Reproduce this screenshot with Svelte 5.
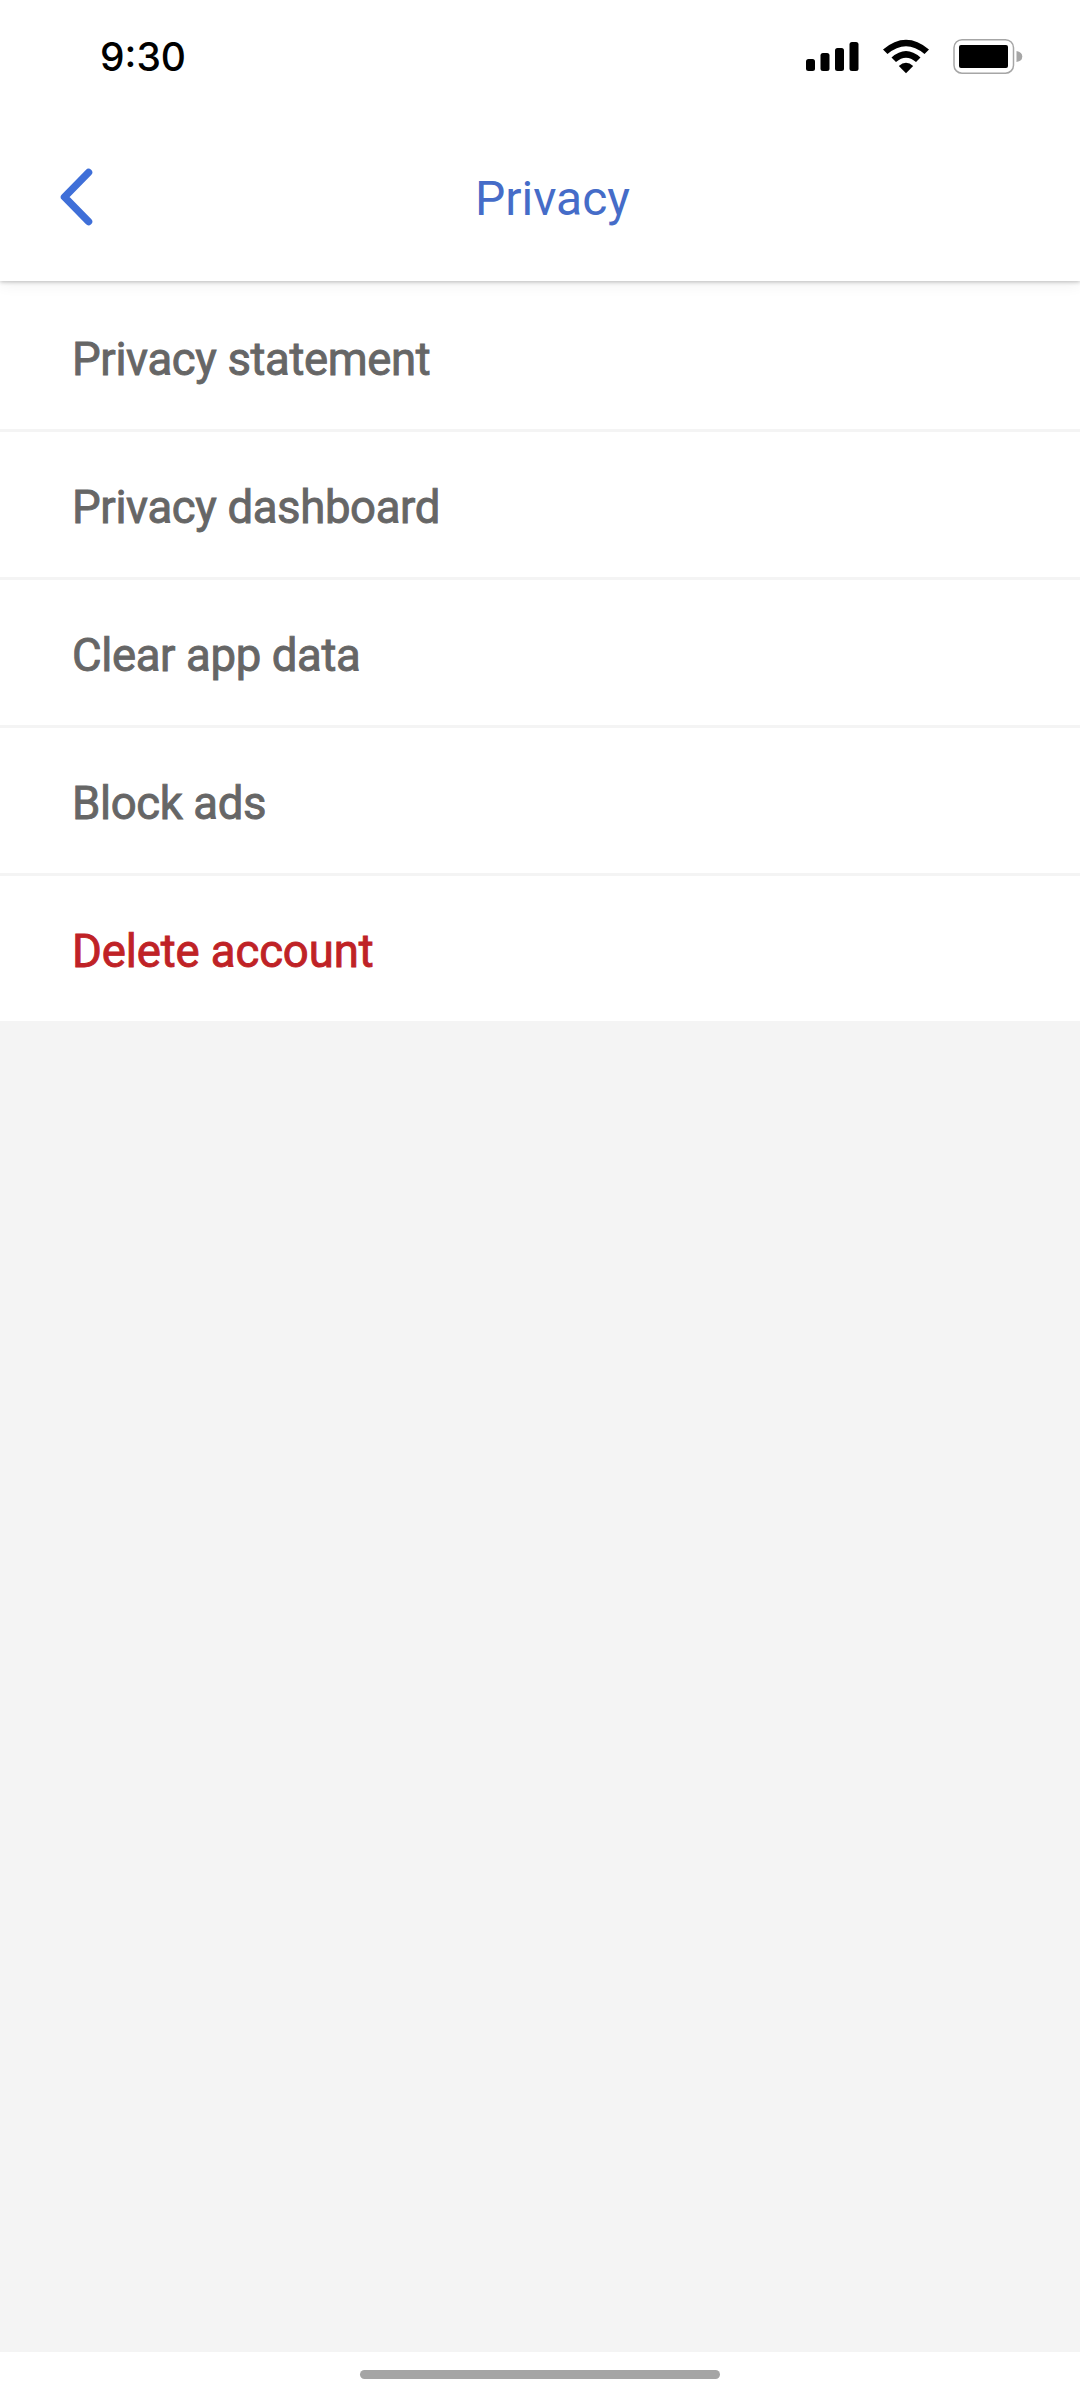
<script lang="ts">
	export let time = '9:30';
	export let title = 'Privacy';

	const items = [
		{ label: 'Privacy statement' },
		{ label: 'Privacy dashboard' },
		{ label: 'Clear app data' },
		{ label: 'Block ads' },
		{ label: 'Delete account', danger: true }
	];
</script>

<div class="screen">
	<div class="status-bar">
		<span class="time">{time}</span>
		<svg class="status-icons" width="220" height="40" viewBox="804 36 220 40">
			<!-- signal -->
			<rect x="806" y="59" width="9" height="12" rx="2.5" />
			<rect x="820.5" y="53" width="9" height="18" rx="2.5" />
			<rect x="835" y="48" width="9" height="23" rx="2.5" />
			<rect x="849.5" y="42" width="9" height="29" rx="2.5" />
			<!-- wifi -->
			<path d="M883 49.500 Q906 30 929 49.500 L924.500 54 Q906 38.500 887.500 54 Z" />
			<path d="M891.500 57.500 Q906 44.500 920.500 57.500 L916 62 Q906 53.500 896 62 Z" />
			<path d="M898.800 66 Q906 59.500 913.200 66 L906 73.200 Z" />
			<!-- battery -->
			<rect class="battery-case" x="954" y="39.700" width="59.500" height="33.500" rx="8" />
			<rect x="959" y="45" width="49" height="23" rx="2" />
			<path class="battery-tip" d="M1016.500 51 Q1022.300 52 1022.300 56.500 Q1022.300 61 1016.500 62 Z" />
		</svg>
	</div>

	<header class="header">
		<button class="back" aria-label="Back">
			<svg width="36" height="60" viewBox="0 0 36 60">
				<path d="M30.500 5.500 L6.500 30 L30.500 54.500" />
			</svg>
		</button>
		<h1>{title}</h1>
	</header>

	<ul class="menu">
		{#each items as item}
			<li class="row" class:danger={item.danger}>{item.label}</li>
		{/each}
	</ul>

	<div class="home-area">
		<div class="home-indicator"></div>
	</div>
</div>

<style>
	:global(body) {
		margin: 0;
	}
	.screen {
		display: flex;
		flex-direction: column;
		width: 1080px;
		height: 2400px;
		background-color: #f4f4f4;
		font-family: Roboto, sans-serif;
	}
	.status-bar {
		display: flex;
		align-items: center;
		justify-content: space-between;
		height: 112px;
		padding: 0 56px 0 100px;
		background-color: #fff;
		z-index: 2;
	}
	.time {
		padding-top: 1px;
		font-family: Inter, sans-serif;
		font-size: 39px;
		font-weight: 460;
		color: #000;
	}
	.header {
		display: grid;
		grid-template-columns: 58px 1fr;
		align-items: center;
		height: 169px;
		padding: 0 91px 0 58px;
		box-sizing: border-box;
		background-color: #fff;
		box-shadow: 0 1px 4px rgba(0, 0, 0, 0.24), 0 4px 14px rgba(0, 0, 0, 0.06);
		z-index: 1;
	}
	.back {
		display: flex;
		padding: 0;
		border: none;
		background: none;
	}
	.back path {
		fill: none;
		stroke: #3f6fd8;
		stroke-width: 7.5;
		stroke-linecap: round;
		stroke-linejoin: round;
	}
	h1 {
		margin: 0;
		padding-top: 3px;
		text-align: center;
		font-size: 48px;
		font-weight: 400;
		color: #456cc8;
	}
	.menu {
		flex: 1;
		margin: 0;
		padding: 0;
		list-style: none;
	}
	.row {
		display: flex;
		align-items: center;
		height: 148px;
		padding: 6px 72px 0;
		box-sizing: border-box;
		border-bottom: 3px solid #f4f4f4;
		background-color: #fff;
		font-size: 45.5px;
		font-weight: 400;
		letter-spacing: -0.36px;
		-webkit-text-stroke: 0.9px currentColor;
		color: #666;
	}
	.row:first-child {
		height: 151px;
		padding-top: 9px;
	}
	.danger {
		letter-spacing: -0.1px;
		color: #bf2226;
	}
	.battery-case {
		fill: none;
		stroke: #a6a6a6;
		stroke-width: 1.5;
	}
	.battery-tip {
		fill: #a6a6a6;
	}
	.home-area {
		display: flex;
		justify-content: center;
		height: 48px;
		padding-top: 18px;
		box-sizing: border-box;
		background-color: #fff;
	}
	.home-indicator {
		width: 360px;
		height: 9px;
		border-radius: 5px;
		background-color: #a5a5a5;
	}
</style>
